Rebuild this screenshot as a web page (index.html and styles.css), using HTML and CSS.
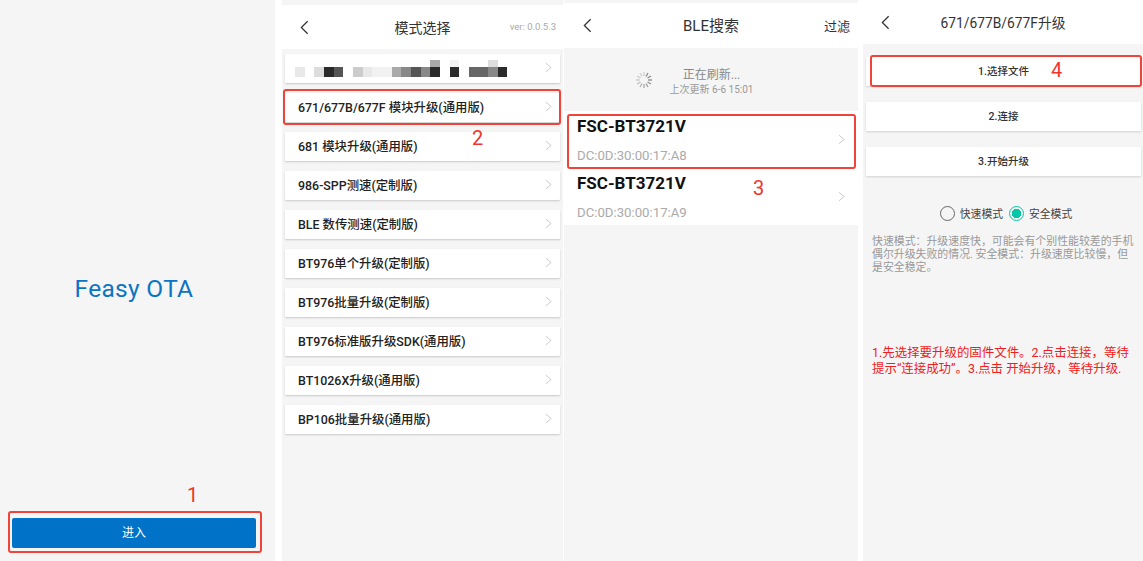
FILE: index.html
```html
<!DOCTYPE html>
<html lang="zh-CN">
	<head>
		<meta charset="UTF-8" />
		<meta name="viewport" content="width=device-width, initial-scale=1.0" />
		<title>Feasy OTA</title>
		<link rel="stylesheet" href="styles.css">
	</head>
	<body>
		<svg width="0" height="0" class="defs">
			<symbol id="chev" viewBox="0 0 8 12"><path d="M1 1l6 5-6 5" fill="none" stroke="#c4c4c4" stroke-width="1"/></symbol>
			<symbol id="back" viewBox="0 0 10 16"><path d="M8.500 1L1.500 8l7 7" fill="none" stroke="#333" stroke-width="1.400"/></symbol>
		</svg>

		<section class="panel splash">
			<div class="logo">Feasy OTA</div>
			<button class="enter">进入</button>
			<span class="num num-1">1</span>
			<div class="mark mark-1"></div>
		</section>

		<section class="panel modes">
			<header class="bar">
				<svg class="back"><use href="#back"/></svg>
				<h2>模式选择</h2>
				<span class="ver">ver: 0.0.5.3</span>
			</header>
			<ul class="list">
				<li class="card">
					<div class="blur">
						<i></i><i></i><i></i><i></i><i></i><i></i><i></i><i></i><i></i><i></i><i></i><i></i><i></i><i></i><i class="g5"></i><i></i><i class="g1"></i><i></i><i></i><i></i><i class="g2"></i><i></i>
						<i class="g3"></i><i></i><i class="g2"></i><i class="g9"></i><i class="g8"></i><i></i><i class="g4"></i><i class="g3"></i><i class="g1"></i><i class="g1"></i><i class="g5"></i><i class="g6"></i><i class="g8"></i><i class="g6"></i><i class="g9"></i><i></i><i class="g9"></i><i></i><i class="g7"></i><i class="g7"></i><i class="g6"></i><i class="g9"></i>
					</div>
					<svg class="chev"><use href="#chev"/></svg>
				</li>
				<li class="card">671/677B/677F 模块升级(通用版)<svg class="chev"><use href="#chev"/></svg></li>
				<li class="card">681 模块升级(通用版)<svg class="chev"><use href="#chev"/></svg></li>
				<li class="card">986-SPP测速(定制版)<svg class="chev"><use href="#chev"/></svg></li>
				<li class="card">BLE 数传测速(定制版)<svg class="chev"><use href="#chev"/></svg></li>
				<li class="card">BT976单个升级(定制版)<svg class="chev"><use href="#chev"/></svg></li>
				<li class="card">BT976批量升级(定制版)<svg class="chev"><use href="#chev"/></svg></li>
				<li class="card">BT976标准版升级SDK(通用版)<svg class="chev"><use href="#chev"/></svg></li>
				<li class="card">BT1026X升级(通用版)<svg class="chev"><use href="#chev"/></svg></li>
				<li class="card">BP106批量升级(通用版)<svg class="chev"><use href="#chev"/></svg></li>
			</ul>
			<span class="num num-2">2</span>
			<div class="mark mark-2"></div>
		</section>

		<section class="panel search">
			<header class="bar">
				<svg class="back"><use href="#back"/></svg>
				<h2>BLE搜索</h2>
				<span class="filter">过滤</span>
			</header>
			<div class="refresh">
				<svg class="spin" viewBox="0 0 18 18">
					<g stroke="#888" stroke-width="1.300">
						<path d="M9 1v4" opacity=".35"/><path d="M13 2l-2 3.500"/><path d="M16 5l-3.500 2"/><path d="M17 9h-4"/>
						<path d="M16 13l-3.500-2" opacity=".9"/><path d="M13 16l-2-3.500" opacity=".8"/><path d="M9 17v-4" opacity=".7"/><path d="M5 16l2-3.500" opacity=".6"/>
						<path d="M2 13l3.500-2" opacity=".5"/><path d="M1 9h4" opacity=".45"/><path d="M2 5l3.500 2" opacity=".4"/><path d="M5 2l2 3.500" opacity=".35"/>
					</g>
				</svg>
				<div class="refresh-text">
					<p class="r1">正在刷新...</p>
					<p class="r2">上次更新 6-6 15:01</p>
				</div>
			</div>
			<div class="devices">
				<div class="device">
					<div><p class="dname">FSC-BT3721V</p><p class="daddr">DC:0D:30:00:17:A8</p></div>
					<svg class="chev"><use href="#chev"/></svg>
				</div>
				<div class="device">
					<div><p class="dname">FSC-BT3721V</p><p class="daddr">DC:0D:30:00:17:A9</p></div>
					<svg class="chev"><use href="#chev"/></svg>
				</div>
			</div>
			<span class="num num-3">3</span>
			<div class="mark mark-3"></div>
		</section>

		<section class="panel upgrade">
			<header class="bar">
				<svg class="back"><use href="#back"/></svg>
				<h2>671/677B/677F升级</h2>
			</header>
			<div class="steps">
				<button class="step">1.选择文件</button>
				<button class="step">2.连接</button>
				<button class="step">3.开始升级</button>
			</div>
			<div class="modes-pick">
				<span class="radio"></span><span>快速模式</span>
				<span class="radio on"></span><span>安全模式</span>
			</div>
			<p class="note">快速模式：升级速度快，可能会有个别性能较差的手机偶尔升级失败的情况. 安全模式：升级速度比较慢，但是安全稳定。</p>
			<p class="tip">1.先选择要升级的固件文件。2.点击连接，等待提示“连接成功”。3.点击 开始升级，等待升级.</p>
			<span class="num num-4">4</span>
			<div class="mark mark-4"></div>
		</section>
	</body>
</html>
```

FILE: styles.css
```css
* {
	box-sizing: border-box;
}

body {
	margin: 0;
	width: 1143px;
	height: 561px;
	overflow: hidden;
	display: flex;
	background: #fff;
	font-family: Roboto, "Noto Sans CJK SC", sans-serif;
	color: #222;
}

.defs {
	position: absolute;
}

p, h2, ul {
	margin: 0;
	padding: 0;
}

.panel {
	position: relative;
	height: 561px;
	background: #f5f5f5;
	flex: none;
}

.splash {
	width: 275px;
	margin-right: 7px;
	padding-right: 7px;
	display: flex;
	flex-direction: column;
	align-items: center;
}

.logo {
	margin-top: 273px;
	font-size: 24.5px;
	line-height: 32px;
	color: #0b74c4;
	letter-spacing: 0.3px;
}

.enter {
	margin-top: 213px;
	width: 244px;
	height: 30px;
	border: none;
	border-radius: 2px;
	background: #0073c8;
	color: #fff;
	font: 12px/30px Roboto, "Noto Sans CJK SC", sans-serif;
	padding: 0;
}

.modes {
	width: 281px;
	margin-right: 1px;
	padding-top: 5px;
}

.bar {
	height: 44px;
	background: #fff;
	display: flex;
	align-items: center;
	justify-content: center;
	position: relative;
}

.bar h2 {
	font-size: 14px;
	font-weight: 400;
	color: #333;
}

.back {
	position: absolute;
	left: 18px;
	top: 15px;
	width: 9px;
	height: 15px;
}

.ver {
	position: absolute;
	right: 7px;
	top: 16px;
	font-size: 9.5px;
	color: #aaa;
}

.list {
	list-style: none;
	padding: 5px 3px 0;
	display: flex;
	flex-direction: column;
	gap: 10px;
}

.card {
	height: 29px;
	background: #fff;
	box-shadow: 0 1px 2px rgba(0,0,0,0.18);
	border-radius: 1px;
	display: flex;
	align-items: center;
	justify-content: space-between;
	padding: 0 8px 2px 13px;
	font-size: 12.4px;
	font-weight: 500;
	color: #222;
}

.chev {
	width: 7px;
	height: 11px;
	flex: none;
}

.blur {
	display: grid;
	grid-template-columns: repeat(22, 9.67px);
	grid-template-rows: 7px 10px;
	margin: 2px 0 0 -3px;
}

.g1 { background: #f2f2f2; }
.g2 { background: #ddd; }
.g3 { background: #e8e8e8; }
.g4 { background: #ccc; }
.g5 { background: #aaa; }
.g6 { background: #888; }
.g7 { background: #666; }
.g8 { background: #555; }
.g9 { background: #2a2a2a; }

.search {
	width: 294px;
	margin-right: 5px;
	padding-top: 3px;
}

.search .bar {
	height: 45px;
	padding-bottom: 2px;
}

.search .bar h2 {
	font-size: 15px;
}

.search .back {
	left: 19px;
	top: 15px;
}

.filter {
	position: absolute;
	right: 8px;
	top: 13px;
	font-size: 13px;
	color: #333;
}

.refresh {
	height: 63px;
	display: flex;
	align-items: center;
	justify-content: center;
	gap: 17px;
	padding: 4px 34px 0 0;
}

.spin {
	width: 18px;
	height: 18px;
	margin-top: -3px;
}

.refresh-text {
	text-align: center;
}

.r1 {
	font-size: 12px;
	line-height: 16px;
	color: #888;
}

.r2 {
	font-size: 10px;
	line-height: 14px;
	color: #999;
}

.devices {
	background: #fff;
}

.device {
	height: 57px;
	display: flex;
	align-items: center;
	justify-content: space-between;
	padding: 0 13px 0 13px;
}

.dname {
	font-size: 17px;
	line-height: 20px;
	font-weight: 700;
	color: #111;
	margin-top: 0;
}

.daddr {
	margin-top: 12px;
	font-size: 13.2px;
	line-height: 15px;
	color: #aaa;
}

.upgrade {
	width: 280px;
}

.upgrade .bar {
	height: 44px;
}

.upgrade .bar h2 {
	font-size: 13.8px;
}

.upgrade .back {
	left: 18px;
	top: 15px;
}

.steps {
	display: flex;
	flex-direction: column;
	gap: 16px;
	padding: 13px 2px 0 3px;
}

.step {
	height: 29px;
	border: none;
	background: #fff;
	box-shadow: 0 1px 2px rgba(0,0,0,0.15);
	font: 500 10.5px/29px Roboto, "Noto Sans CJK SC", sans-serif;
	color: #333;
	padding: 0;
}

.modes-pick {
	margin-top: 29px;
	height: 16px;
	display: flex;
	align-items: center;
	justify-content: center;
	font-size: 10.8px;
	color: #444;
	margin-left: 6px;
}

.radio {
	width: 15px;
	height: 15px;
	border-radius: 50%;
	border: 1.5px solid #666;
	margin-right: 5px;
	background: #f5f5f5;
}

.radio.on {
	margin-left: 6px;
	border-color: #00c9a7;
	background: radial-gradient(circle, #00c9a7 0 4.5px, transparent 5px);
}

.note {
	margin: 14px 8px 0 9px;
	font-size: 10.9px;
	line-height: 13px;
	color: #999;
}

.tip {
	margin: 71px 8px 0 9px;
	font-size: 12.45px;
	line-height: 15.5px;
	color: #f02020;
}

.mark {
	position: absolute;
	border: 2.5px solid #f0443a;
	border-radius: 3px;
}

.mark-1 { left: 8px; top: 511px; width: 254px; height: 42px; }
.mark-2 { left: 1px; top: 89px; width: 278px; height: 36px; }
.mark-3 { left: 3px; top: 114px; width: 289px; height: 55px; }
.mark-4 { left: 7px; top: 55px; width: 272px; height: 32px; }

.num {
	position: absolute;
	font-size: 20px;
	line-height: 24px;
	color: #f0352b;
}

.num-1 { left: 187px; top: 483px; }
.num-2 { left: 190px; top: 126px; }
.num-3 { left: 189px; top: 176px; }
.num-4 { left: 188px; top: 58px; }
```
